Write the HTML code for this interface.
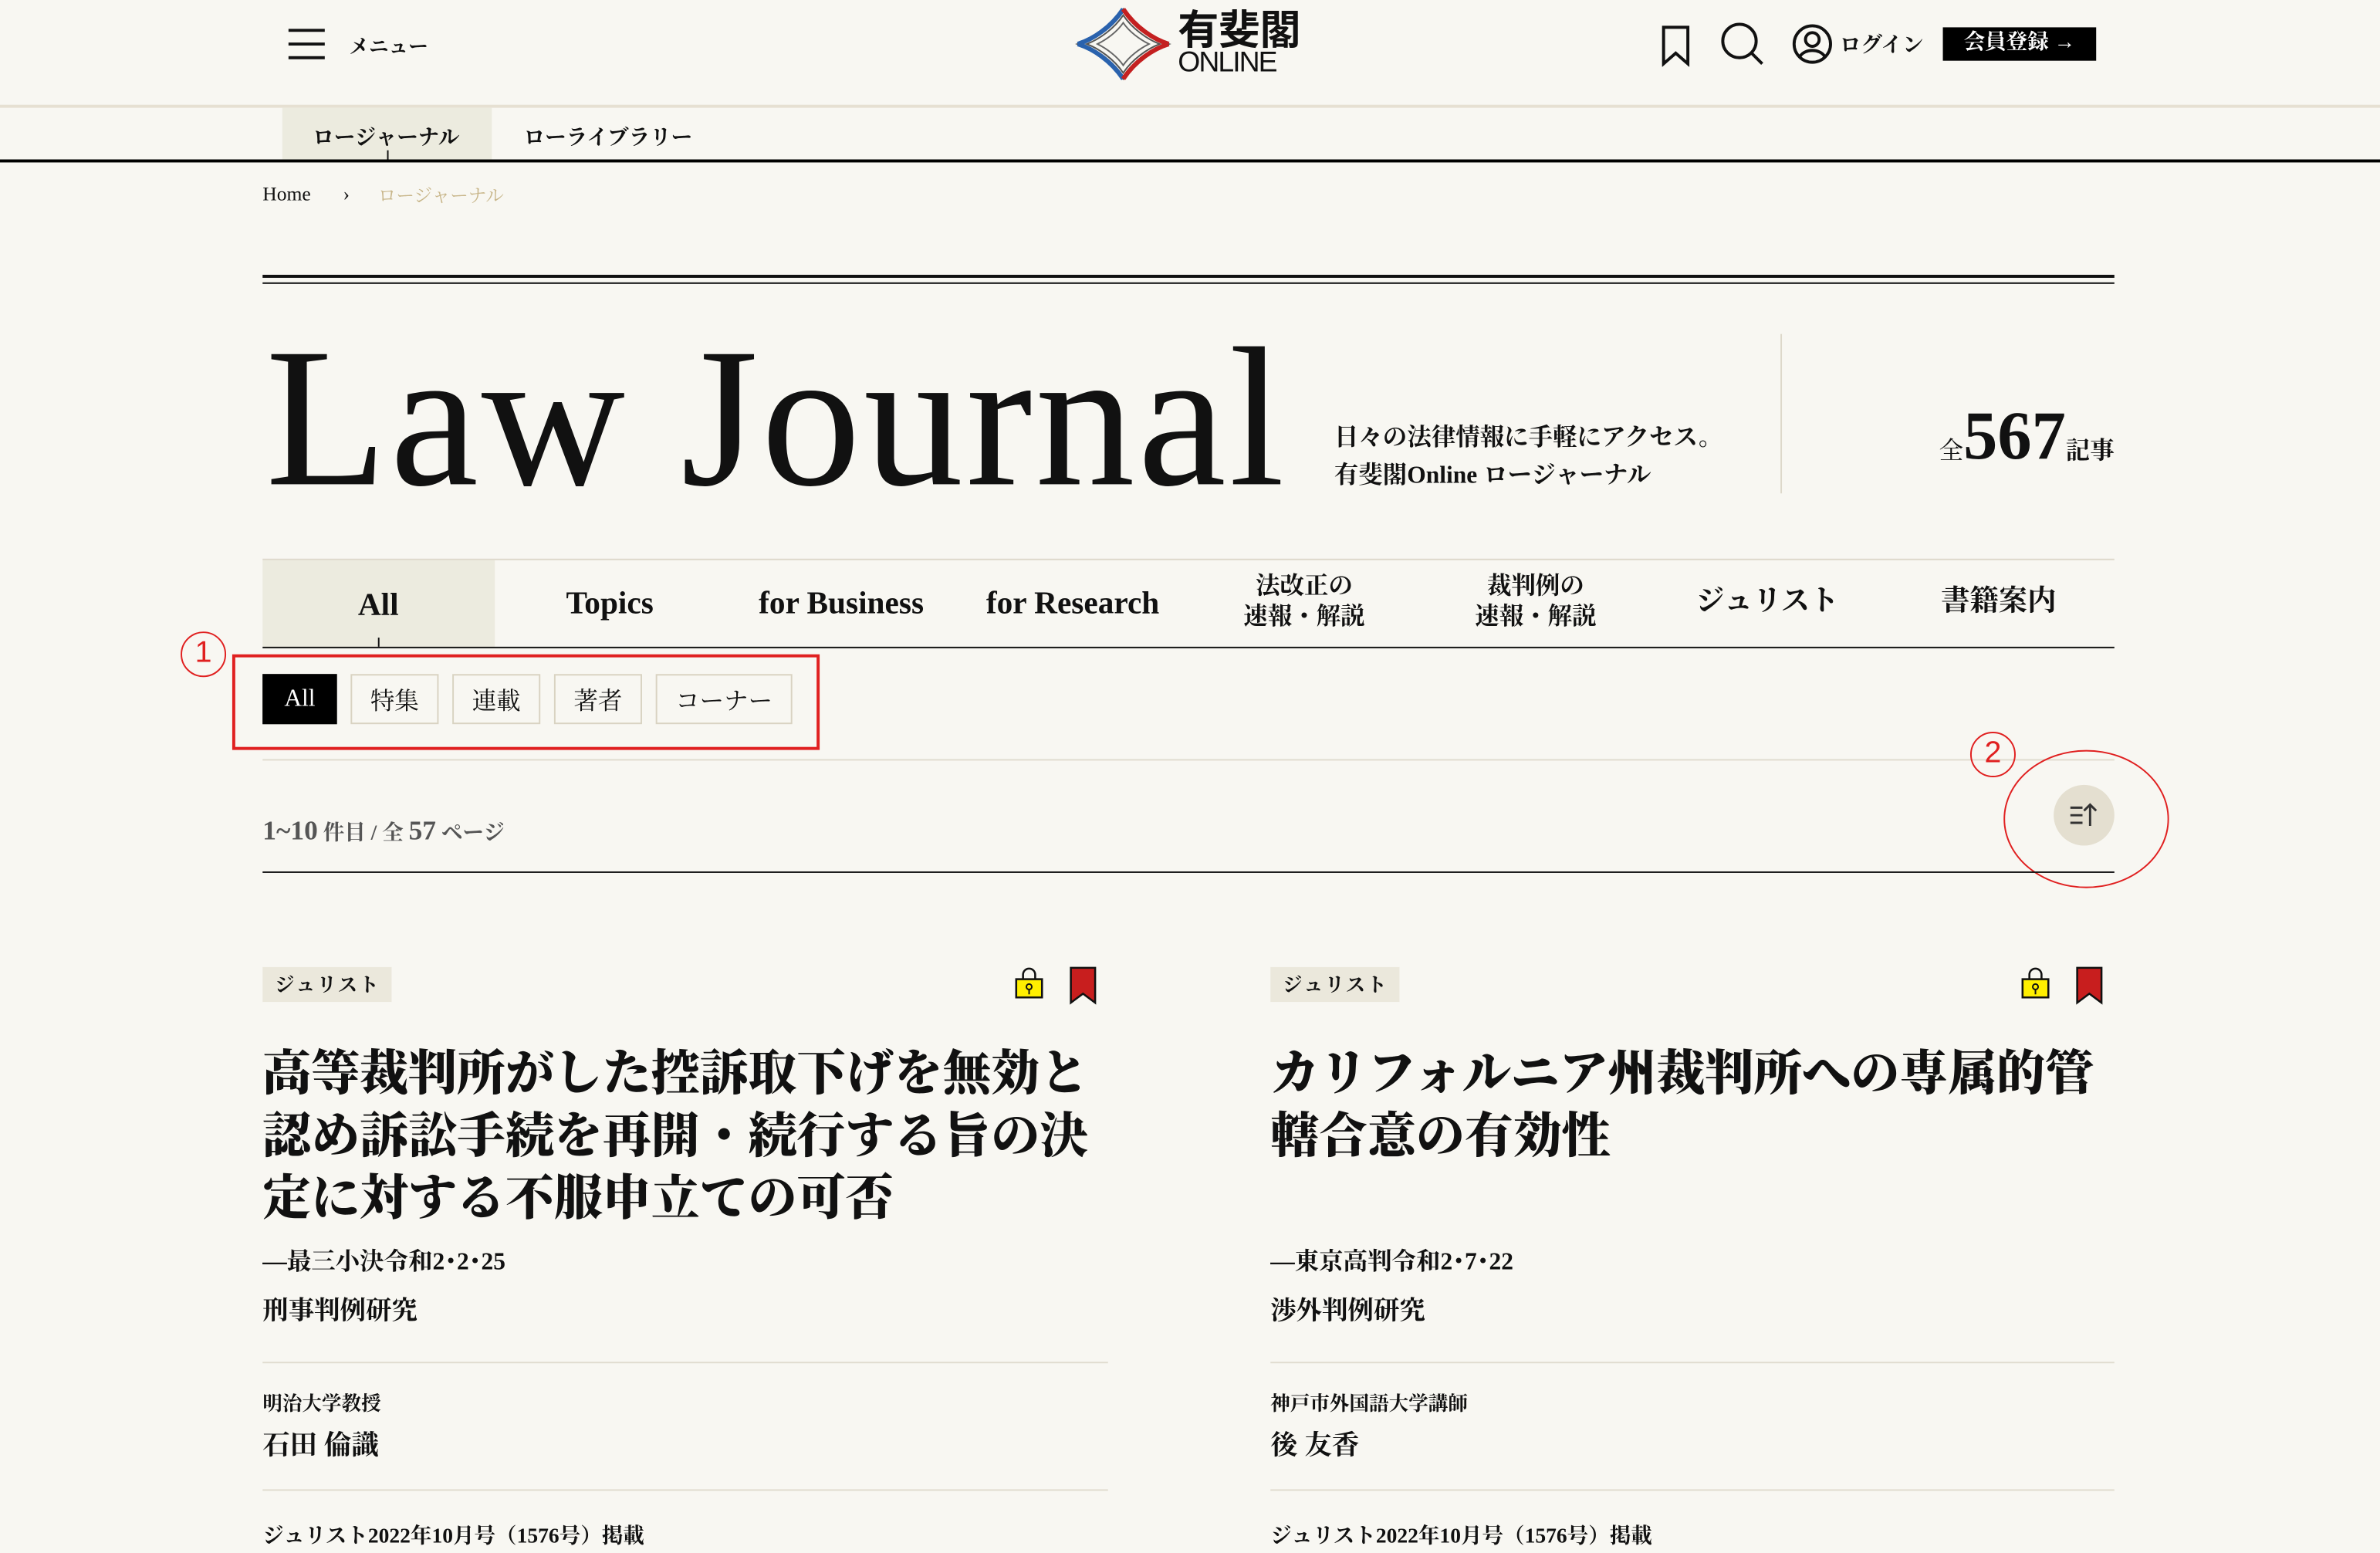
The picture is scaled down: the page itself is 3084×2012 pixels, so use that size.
<!DOCTYPE html>
<html><head><meta charset="utf-8"><style>
*{margin:0;padding:0;box-sizing:border-box}
html,body{width:3084px;height:2012px;overflow:hidden;background:#f8f7f2}
#w{position:absolute;left:0;top:0;width:1568px;height:1023px;transform:scale(1.96684);transform-origin:0 0;font-family:"Liberation Serif","Noto Serif CJK JP",serif;color:#111}
.a{position:absolute;white-space:nowrap}
.b{font-weight:700}
.tab{position:absolute;top:369px;height:55px;width:152.5px;display:flex;align-items:center;justify-content:center;text-align:center;font-size:21px;font-weight:700;line-height:20px}
.tab.s{font-size:16px}
.chip{position:absolute;top:444px;height:33px;border:1px solid #d9d3c2;font-size:16px;display:flex;align-items:center;justify-content:center;background:#f8f7f2}
.tag{position:absolute;top:637px;height:23px;padding:0 8px;background:#ebe8dc;font-size:13px;font-weight:700;line-height:23px;letter-spacing:1px}
.ttl{position:absolute;top:687px;font-size:32px;font-weight:900;line-height:41px;width:560px;white-space:normal}
.hl{position:absolute;height:1px;background:#e0dccf}
</style></head><body><div id="w">
<svg class="a" style="left:190px;top:18px" width="24" height="22"><path d="M0 2h24M0 11h24M0 20h24" stroke="#111" stroke-width="2"/></svg>
<div class="a b" style="left:230px;top:20px;font-size:13px">メニュー</div>
<svg class="a" style="left:708px;top:4px" width="64" height="50" viewBox="0 0 64 50"><path d="M32 2 C24 14 12 22 2 25 C12 28 24 36 32 48 C40 36 52 28 62 25 C52 22 40 14 32 2Z" fill="none" stroke="#444" stroke-width="1"/><path d="M32 6 C26 15 16 22 8 25 C16 28 26 35 32 44 C38 35 48 28 56 25 C48 22 38 15 32 6Z" fill="none" stroke="#555" stroke-width="1"/><path d="M32 11 C28 17 21 22 15 25 C21 28 28 33 32 39 C36 33 43 28 49 25 C43 22 36 17 32 11Z" fill="none" stroke="#666" stroke-width="1"/><path d="M2 25 C12 22 24 14 32 2" stroke="#2a62ad" stroke-width="3" fill="none"/><path d="M2 25 C12 28 24 36 32 48" stroke="#2a62ad" stroke-width="3" fill="none"/><path d="M62 25 C52 22 40 14 32 2" stroke="#c42020" stroke-width="3" fill="none"/><path d="M62 25 C52 28 40 36 32 48" stroke="#c42020" stroke-width="3" fill="none"/></svg>
<div class="a b" style="left:776px;top:3px;font-size:27px;line-height:30px;font-family:'Noto Sans CJK JP',sans-serif">有斐閣</div>
<div class="a" style="left:776px;top:31px;font-size:19px;line-height:22px;font-family:'Liberation Sans',sans-serif;letter-spacing:-1px">ONLINE</div>
<svg class="a" style="left:1093px;top:16px" width="22" height="28"><path d="M3 2h16v24l-8-7-8 7z" fill="none" stroke="#111" stroke-width="2"/></svg>
<svg class="a" style="left:1133px;top:14px" width="30" height="30"><circle cx="13" cy="13" r="11" fill="none" stroke="#111" stroke-width="2"/><path d="M21 21l7 7" stroke="#111" stroke-width="2"/></svg>
<svg class="a" style="left:1180px;top:15px" width="28" height="28"><circle cx="14" cy="14" r="12" fill="none" stroke="#111" stroke-width="2"/><circle cx="14" cy="11" r="4.5" fill="none" stroke="#111" stroke-width="2"/><path d="M6 22c3-5 13-5 16 0" fill="none" stroke="#111" stroke-width="2"/></svg>
<div class="a b" style="left:1212px;top:19px;font-size:14px">ログイン</div>
<div class="a b" style="left:1280px;top:18px;width:101px;height:22px;background:#000;color:#fff;font-size:14px;line-height:22px;text-align:center">会員登録 →</div>
<div class="a" style="left:0;top:69px;width:1568px;height:2px;background:#e6e0d2"></div>
<div class="a" style="left:186px;top:71px;width:138px;height:35px;background:#ecebdf"></div>
<div class="a b" style="left:206px;top:80px;font-size:14px">ロージャーナル</div>
<div class="a" style="left:255px;top:99px;width:1px;height:7px;background:#111"></div>
<div class="a b" style="left:345px;top:80px;font-size:14px">ローライブラリー</div>
<div class="a" style="left:0;top:105px;width:1568px;height:2px;background:#000"></div>
<div class="a" style="left:173px;top:120px;font-size:13px">Home</div>
<div class="a" style="left:226px;top:120px;font-size:13px">›</div>
<div class="a" style="left:249px;top:120px;font-size:12px;color:#c8b68a">ロージャーナル</div>
<div class="a" style="left:173px;top:181px;width:1220px;height:2px;background:#111"></div>
<div class="a" style="left:173px;top:186px;width:1220px;height:1px;background:#111"></div>
<div class="a" style="left:175px;top:201px;font-size:131px;line-height:150px;letter-spacing:2px">Law Journal</div>
<div class="a b" style="left:879px;top:276px;font-size:16px;line-height:25px">日々の法律情報に手軽にアクセス。<br>有斐閣Online ロージャーナル</div>
<div class="a" style="left:1173px;top:220px;width:1px;height:105px;background:#ddd8ca"></div>
<div class="a" style="right:175px;top:262px;font-size:16px;line-height:50px"><span>全</span><span class="b" style="font-size:45px">567</span><span class="b">記事</span></div>
<div class="a" style="left:173px;top:368px;width:1220px;height:1px;background:#ddd8ca"></div>
<div class="tab" style="left:173px;background:#ecebdf;height:57px">All</div>
<div class="tab" style="left:325.5px">Topics</div>
<div class="tab" style="left:478px">for Business</div>
<div class="tab" style="left:630.5px">for Research</div>
<div class="tab s" style="left:783px">法改正の<br>速報・解説</div>
<div class="tab s" style="left:935.5px">裁判例の<br>速報・解説</div>
<div class="tab" style="left:1088px;font-size:19px">ジュリスト</div>
<div class="tab" style="left:1240.5px;font-size:19px">書籍案内</div>
<div class="a" style="left:173px;top:426px;width:1220px;height:1px;background:#111"></div>
<div class="a" style="left:249px;top:420px;width:1px;height:6px;background:#111"></div>
<div class="chip" style="left:173px;width:49px;background:#000;color:#fff;border-color:#000">All</div>
<div class="chip" style="left:231px;width:58px">特集</div>
<div class="chip" style="left:298px;width:58px">連載</div>
<div class="chip" style="left:365px;width:58px">著者</div>
<div class="chip" style="left:432px;width:90px">コーナー</div>
<div class="a" style="left:153px;top:431px;width:387px;height:63px;border:2px solid #e02020"></div>
<div class="a" style="left:119px;top:416px;width:30px;height:30px;border:1.5px solid #e02020;border-radius:50%;color:#e02020;font-size:20px;line-height:27px;text-align:center;font-family:'Liberation Sans',sans-serif">1</div>
<div class="hl" style="left:173px;top:500px;width:1220px"></div>
<div class="a" style="left:173px;top:537px;font-size:18px;color:#555"><span class="b">1~10</span><span style="font-size:14px" class="b"> 件目 / 全 </span><span class="b">57</span><span style="font-size:14px" class="b"> ページ</span></div>
<div class="a" style="left:1353px;top:517px;width:40px;height:40px;border-radius:50%;background:#e4dfd0"></div>
<svg class="a" style="left:1363px;top:527px" width="20" height="20"><path d="M1 5h8M1 10h8M1 15h8M14 17V3M10 7l4-4 4 4" fill="none" stroke="#333" stroke-width="1.5"/></svg>
<div class="a" style="left:1320px;top:494px;width:109px;height:91px;border:1.5px solid #e02020;border-radius:50%"></div>
<div class="a" style="left:1298px;top:482px;width:30px;height:30px;border:1.5px solid #e02020;border-radius:50%;color:#e02020;font-size:20px;line-height:27px;text-align:center;font-family:'Liberation Sans',sans-serif">2</div>
<div class="a" style="left:173px;top:574px;width:1220px;height:1px;background:#111"></div>
<div class="tag" style="left:173px">ジュリスト</div>
<svg class="a" style="left:668px;top:636px" width="20" height="22"><path d="M6 9V6a4 4 0 0 1 8 0v3" fill="none" stroke="#111" stroke-width="1.3"/><rect x="1.5" y="9" width="17" height="12" fill="#ffef00" stroke="#111" stroke-width="1.3"/><circle cx="10" cy="14" r="1.8" fill="none" stroke="#111"/><path d="M10 16v3" stroke="#111"/></svg>
<svg class="a" style="left:704px;top:636px" width="20" height="26"><path d="M1.5 1.5h16v23l-8-6-8 6z" fill="#c81e1e" stroke="#111" stroke-width="1.3"/></svg>
<div class="ttl" style="left:173px;width:558px">高等裁判所がした控訴取下げを無効と<br>認め訴訟手続を再開・続行する旨の決<br>定に対する不服申立ての可否</div>
<div class="a b" style="left:173px;top:818px;font-size:16px">—最三小決令和2･2･25</div>
<div class="a b" style="left:173px;top:849px;font-size:17px">刑事判例研究</div>
<div class="hl" style="left:173px;top:897px;width:557px"></div>
<div class="a b" style="left:173px;top:914px;font-size:13px">明治大学教授</div>
<div class="a b" style="left:173px;top:938px;font-size:18px">石田 倫識</div>
<div class="hl" style="left:173px;top:981px;width:557px"></div>
<div class="a b" style="left:173px;top:1001px;font-size:14px">ジュリスト2022年10月号（1576号）掲載</div>
<div class="tag" style="left:837px">ジュリスト</div>
<svg class="a" style="left:1331px;top:636px" width="20" height="22"><path d="M6 9V6a4 4 0 0 1 8 0v3" fill="none" stroke="#111" stroke-width="1.3"/><rect x="1.5" y="9" width="17" height="12" fill="#ffef00" stroke="#111" stroke-width="1.3"/><circle cx="10" cy="14" r="1.8" fill="none" stroke="#111"/><path d="M10 16v3" stroke="#111"/></svg>
<svg class="a" style="left:1367px;top:636px" width="20" height="26"><path d="M1.5 1.5h16v23l-8-6-8 6z" fill="#c81e1e" stroke="#111" stroke-width="1.3"/></svg>
<div class="ttl" style="left:837px;width:558px">カリフォルニア州裁判所への専属的管<br>轄合意の有効性</div>
<div class="a b" style="left:837px;top:818px;font-size:16px">—東京高判令和2･7･22</div>
<div class="a b" style="left:837px;top:849px;font-size:17px">渉外判例研究</div>
<div class="hl" style="left:837px;top:897px;width:556px"></div>
<div class="a b" style="left:837px;top:914px;font-size:13px">神戸市外国語大学講師</div>
<div class="a b" style="left:837px;top:938px;font-size:18px">後 友香</div>
<div class="hl" style="left:837px;top:981px;width:556px"></div>
<div class="a b" style="left:837px;top:1001px;font-size:14px">ジュリスト2022年10月号（1576号）掲載</div>
</div></body></html>
